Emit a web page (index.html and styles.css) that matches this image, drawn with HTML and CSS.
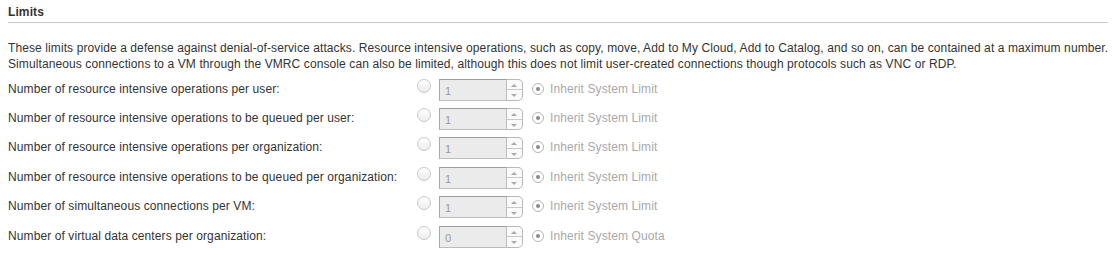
FILE: index.html
```html
<!DOCTYPE html>
<html lang="en">
<head>
  <meta charset="UTF-8">
  <title>Limits</title>
  <link rel="stylesheet" href="styles.css">
</head>
<body>
  <div class="section">
    <h3 class="section-title">Limits</h3>
    <p class="desc">These limits provide a defense against denial-of-service attacks. Resource intensive operations, such as copy, move, Add to My Cloud, Add to Catalog, and so on, can be contained at a maximum number. Simultaneous connections to a VM through the VMRC console can also be limited, although this does not limit user-created connections though protocols such as VNC or RDP.</p>
    <div class="rows">
      <div class="row">
        <span class="label">Number of resource intensive operations per user:</span>
        <span class="radio"></span>
        <span class="spin"><span class="spin-val">1</span><span class="spin-btns"><i class="up"></i><i class="down"></i></span></span>
        <span class="radio checked"></span>
        <span class="inherit">Inherit System Limit</span>
      </div>
      <div class="row">
        <span class="label">Number of resource intensive operations to be queued per user:</span>
        <span class="radio"></span>
        <span class="spin"><span class="spin-val">1</span><span class="spin-btns"><i class="up"></i><i class="down"></i></span></span>
        <span class="radio checked"></span>
        <span class="inherit">Inherit System Limit</span>
      </div>
      <div class="row">
        <span class="label">Number of resource intensive operations per organization:</span>
        <span class="radio"></span>
        <span class="spin"><span class="spin-val">1</span><span class="spin-btns"><i class="up"></i><i class="down"></i></span></span>
        <span class="radio checked"></span>
        <span class="inherit">Inherit System Limit</span>
      </div>
      <div class="row">
        <span class="label">Number of resource intensive operations to be queued per organization:</span>
        <span class="radio"></span>
        <span class="spin"><span class="spin-val">1</span><span class="spin-btns"><i class="up"></i><i class="down"></i></span></span>
        <span class="radio checked"></span>
        <span class="inherit">Inherit System Limit</span>
      </div>
      <div class="row">
        <span class="label">Number of simultaneous connections per VM:</span>
        <span class="radio"></span>
        <span class="spin"><span class="spin-val">1</span><span class="spin-btns"><i class="up"></i><i class="down"></i></span></span>
        <span class="radio checked"></span>
        <span class="inherit">Inherit System Limit</span>
      </div>
      <div class="row">
        <span class="label">Number of virtual data centers per organization:</span>
        <span class="radio"></span>
        <span class="spin"><span class="spin-val">0</span><span class="spin-btns"><i class="up"></i><i class="down"></i></span></span>
        <span class="radio checked"></span>
        <span class="inherit">Inherit System Quota</span>
      </div>
    </div>
  </div>
</body>
</html>
```

FILE: styles.css
```css
* {
  margin: 0;
  padding: 0;
  box-sizing: border-box;
}
body {
  margin: 0;
  padding: 0 2px 0 8px;
  font-family: "Liberation Sans", Arial, sans-serif;
  font-size: 12px;
  letter-spacing: 0.1px;
  color: #333;
  background: #fff;
}
.section-title {
  font-size: 12px;
  font-weight: bold;
  color: #333;
  padding-top: 5px;
  height: 23px;
  line-height: 14px;
  border-bottom: 1px solid #c5cbcb;
  margin-right: 2px;
}
.desc {
  margin-top: 17px;
  line-height: 16px;
}
.rows {
  margin-top: 2px;
}
.row {
  display: flex;
  align-items: center;
  height: 29.4px;
}
.label {
  width: 408px;
  flex: none;
}
.radio {
  width: 14px;
  height: 14px;
  border-radius: 50%;
  border: 1px solid #c9c9c9;
  background: linear-gradient(#fff, #ececec);
  flex: none;
  margin-top: -6px;
  margin-left: 1px;
  position: relative;
}
.radio.checked {
  width: 12px;
  height: 12px;
  margin: 0 6px 0 9px;
  border-color: #b5b5b5;
  background: #fff;
}
.radio.checked::after {
  content: "";
  position: absolute;
  left: 3px;
  top: 3px;
  width: 4px;
  height: 4px;
  border-radius: 50%;
  background: #8a8a8a;
}
.spin {
  display: flex;
  margin-left: 8px;
  height: 22px;
  margin-top: 2px;
}
.spin-val {
  width: 68px;
  height: 22px;
  border: 1px solid #bdbdbd;
  border-top-color: #9c9c9c;
  border-left-color: #a8a8a8;
  background: #ebebeb;
  color: #999;
  padding: 5px 0 0 5px;
  line-height: 12px;
  font-size: 11px;
}
.spin-btns {
  width: 16px;
  height: 22px;
  border: 1px solid #b9b9b9;
  border-left: none;
  border-radius: 0 5px 5px 0;
  background: #fafafa;
  display: flex;
  flex-direction: column;
}
.spin-btns i {
  flex: 1;
  position: relative;
}
.spin-btns .up {
  border-bottom: 1px solid #c9c9c9;
}
.spin-btns i::after {
  content: "";
  position: absolute;
  left: 4px;
  top: 4px;
  border-left: 3px solid transparent;
  border-right: 3px solid transparent;
}
.spin-btns .up::after {
  border-bottom: 3px solid #aaa;
}
.spin-btns .down::after {
  border-top: 3px solid #aaa;
}
.inherit {
  color: #a9a9a9;
}
```
